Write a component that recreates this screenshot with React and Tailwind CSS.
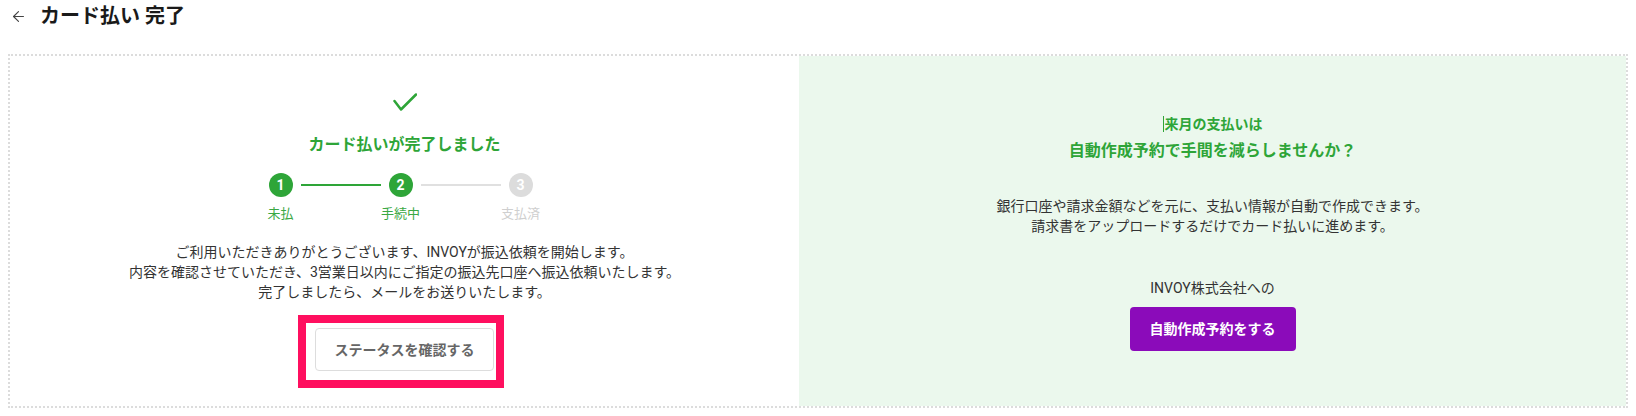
import React from "react";
import { ArrowLeft } from "lucide-react";

const FONT = { fontFamily: 'Roboto, "Noto Sans CJK JP", sans-serif' };

const steps = [
  { no: 1, label: "未払", done: true },
  { no: 2, label: "手続中", done: true },
  { no: 3, label: "支払済", done: false },
];

const StepBar = () => (
  <div className="flex items-start pr-[8px]">
    {steps.map((step, index) => (
      <React.Fragment key={step.no}>
        {index > 0 && (
          <div
            className={
              step.done
                ? "mx-2 mt-[11px] h-[2px] w-20 bg-[#2ea538]"
                : "mx-2 mt-[11px] h-[2px] w-20 bg-[#e0e0e0]"
            }
          />
        )}
        <div className="flex w-6 flex-col items-center">
          <div
            className={
              step.done
                ? "flex h-6 w-6 items-center justify-center rounded-full bg-[#2ea538] text-[14px] font-bold text-white"
                : "flex h-6 w-6 items-center justify-center rounded-full bg-[#dcdcdc] text-[14px] font-bold text-white"
            }
          >
            {step.no}
          </div>
          <p
            className={
              step.done
                ? "mt-[7px] whitespace-nowrap text-[13px] leading-5 text-[#3aa844]"
                : "mt-[7px] whitespace-nowrap text-[13px] leading-5 text-[#cfcfcf]"
            }
          >
            {step.label}
          </p>
        </div>
      </React.Fragment>
    ))}
  </div>
);

const App = () => (
  <div className="h-[416px] w-full bg-white" style={FONT}>
    <div className="flex h-8 items-center px-[10px]">
      <ArrowLeft size={17} strokeWidth={1.6} className="text-[#444]" />
      <h1 className="ml-[13px] text-[20px] font-bold text-[#1a1a1a]">
        カード払い 完了
      </h1>
    </div>

    <div className="mx-2 mt-[22px] flex h-[354px] border-2 border-dotted border-[#dcdcdc]">
      <div className="flex w-[789px] flex-col items-center pt-[37px]">
        <svg width="24" height="18" viewBox="0 0 24 18" fill="none">
          <path
            d="M1.5 8 L8 16.5 L23 1.5"
            stroke="#2ea538"
            strokeWidth="2.5"
            strokeLinecap="round"
            strokeLinejoin="round"
          />
        </svg>
        <p className="mt-[22px] text-[16px] font-bold leading-6 text-[#2ea538]">
          カード払いが完了しました
        </p>
        <div className="mt-4">
          <StepBar />
        </div>
        <div className="mt-[18px] text-center text-sm leading-5 text-[#333]">
          <p>ご利用いただきありがとうございます、INVOYが振込依頼を開始します。</p>
          <p>内容を確認させていただき、3営業日以内にご指定の振込先口座へ振込依頼いたします。</p>
          <p>完了しましたら、メールをお送りいたします。</p>
        </div>
        <div className="relative mt-[26px]">
          <button className="h-[43px] w-[179px] rounded border border-[#dddddd] bg-white text-sm font-bold text-[#666]">
            ステータスを確認する
          </button>
          <div className="pointer-events-none absolute -bottom-[17px] -left-[17px] -right-[10px] -top-[13px] border-[8px] border-[#ff0f5f]" />
        </div>
      </div>

      <div className="flex flex-1 flex-col items-center justify-center bg-[#ebf8ed] text-center">
        <p className="text-[14px] font-bold leading-6 text-[#2ea538]">
          <span className="mr-px inline-block h-4 w-px bg-[#2ea538] align-[-3px]" />
          来月の支払いは
        </p>
        <p className="mt-px text-[16px] font-bold leading-7 text-[#2ea538]">
          自動作成予約で手間を減らしませんか？
        </p>
        <div className="mt-[31px] text-sm leading-5 text-[#333]">
          <p>銀行口座や請求金額などを元に、支払い情報が自動で作成できます。</p>
          <p>請求書をアップロードするだけでカード払いに進めます。</p>
        </div>
        <p className="mt-[42px] text-sm leading-5 text-[#333]">INVOY株式会社への</p>
        <button className="mt-[9px] h-[44px] w-[166px] rounded bg-[#8b0bba] text-sm font-bold text-white">
          自動作成予約をする
        </button>
      </div>
    </div>
  </div>
);

export default App;
